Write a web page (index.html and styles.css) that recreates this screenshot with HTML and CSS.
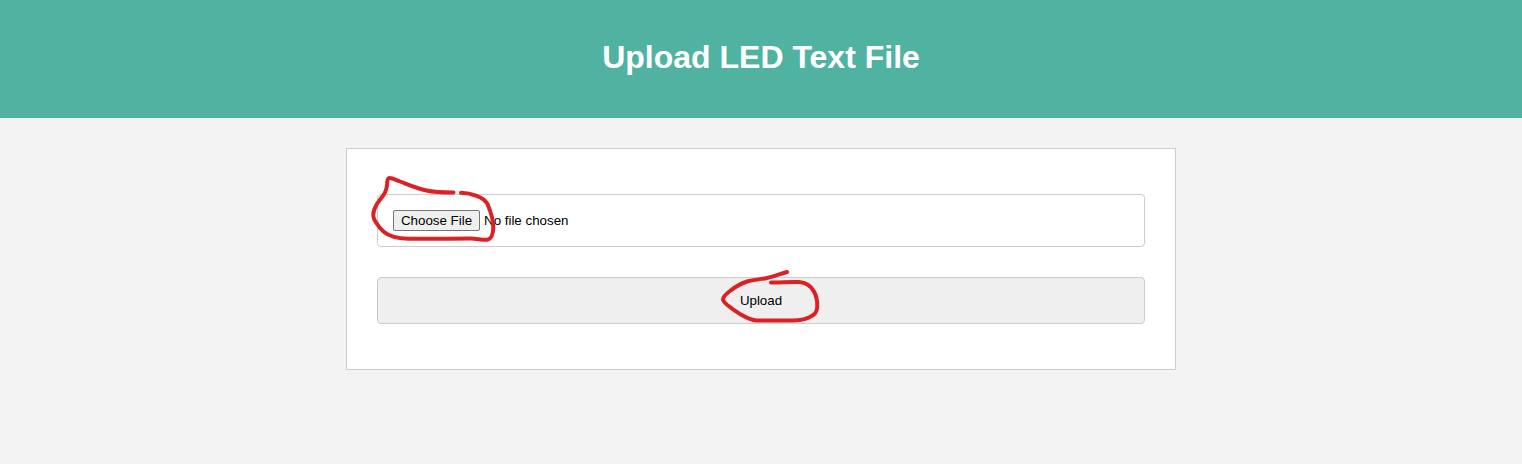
FILE: index.html
```
<!DOCTYPE html>
<html lang="en">
<head>
<meta charset="utf-8">
<title>Upload LED Text File</title>
<link rel="stylesheet" href="styles.css">
</head>
<body>
<header class="header"><h1 class="title">Upload LED Text File</h1></header>
<form class="card">
  <div class="file-field">
    <button type="button" class="choose">Choose File</button>
    <span class="file-name">No file chosen</span>
  </div>
  <button type="button" class="upload">Upload</button>
</form>
<svg class="marks" width="1522" height="464" viewBox="0 0 1522 464" aria-hidden="true">
  <path d="M453.500 192.500C443 192.500 434 192.300 426.500 190.500C417 188.500 408 184.500 400 181.500C396 180 392 178 390 178C387.500 178 387.500 180 387.300 182C387 187 387 190 383.500 195C381 199 377 202 374.500 209C373 213 373 217 374.500 220C377 224 379 228 384 232C390 237 398 238.500 408 238.700C430 239 450 238.500 471 238.500C477 238.500 484 240.500 488 239.500C492 238.500 493 234 493.300 228C493.500 221 490 210 487.500 204C484 197 471 193 461 192.700"/>
  <path d="M787 272C780 274 774 276.500 767 278C760 279.500 754 279.500 747 281.500C741 283.500 735 287 730 291C726 294 723 296.500 723 299.500C723.500 303.500 733 309.500 740 314C746 317.500 751 320.500 757 320.500L793 320.500C800 320.300 805 319.500 809 317.500C814 315 817 313 817.200 307C817.500 301 816.500 296 814 291.500C811 286 806 282.500 799 282C791 281.500 781 282.500 771 282.500"/>
</svg>
</body>
</html>
```
FILE: styles.css
```
* { box-sizing: border-box; }
body {
  margin: 0;
  background: #f3f3f3;
  color: #000;
  font-family: "Liberation Sans", Arial, sans-serif;
}
.header {
  height: 118px;
  padding-top: 39px;
  background: #50b3a2;
  text-align: center;
}
.title {
  margin: 0;
  color: #fff;
  font-size: 32px;
  line-height: 37px;
}
.card {
  width: 830px;
  height: 222px;
  margin: 30px auto 0;
  padding: 45px 30px;
  background: #fff;
  border: 1px solid #ccc;
}
.file-field {
  display: flex;
  align-items: center;
  gap: 4px;
  height: 53px;
  margin-bottom: 30px;
  padding: 0 15px;
  border: 1px solid #ccc;
  border-radius: 4px;
  font-size: 13.333px;
}
.choose {
  width: 87px;
  height: 21px;
  padding: 0;
  background: #efefef;
  border: 1px solid #767676;
  border-radius: 2px;
  color: #000;
  font: 13.333px/15px "Liberation Sans", Arial, sans-serif;
}
.upload {
  display: block;
  width: 100%;
  height: 47px;
  background: #efefef;
  border: 1px solid #ccc;
  border-radius: 4px;
  color: #000;
  font: 13.333px/15px "Liberation Sans", Arial, sans-serif;
}
.marks {
  position: absolute;
  top: 0;
  left: 0;
  pointer-events: none;
  fill: none;
  stroke: #dc2023;
  stroke-width: 4;
  stroke-linecap: round;
  stroke-linejoin: round;
}
```
